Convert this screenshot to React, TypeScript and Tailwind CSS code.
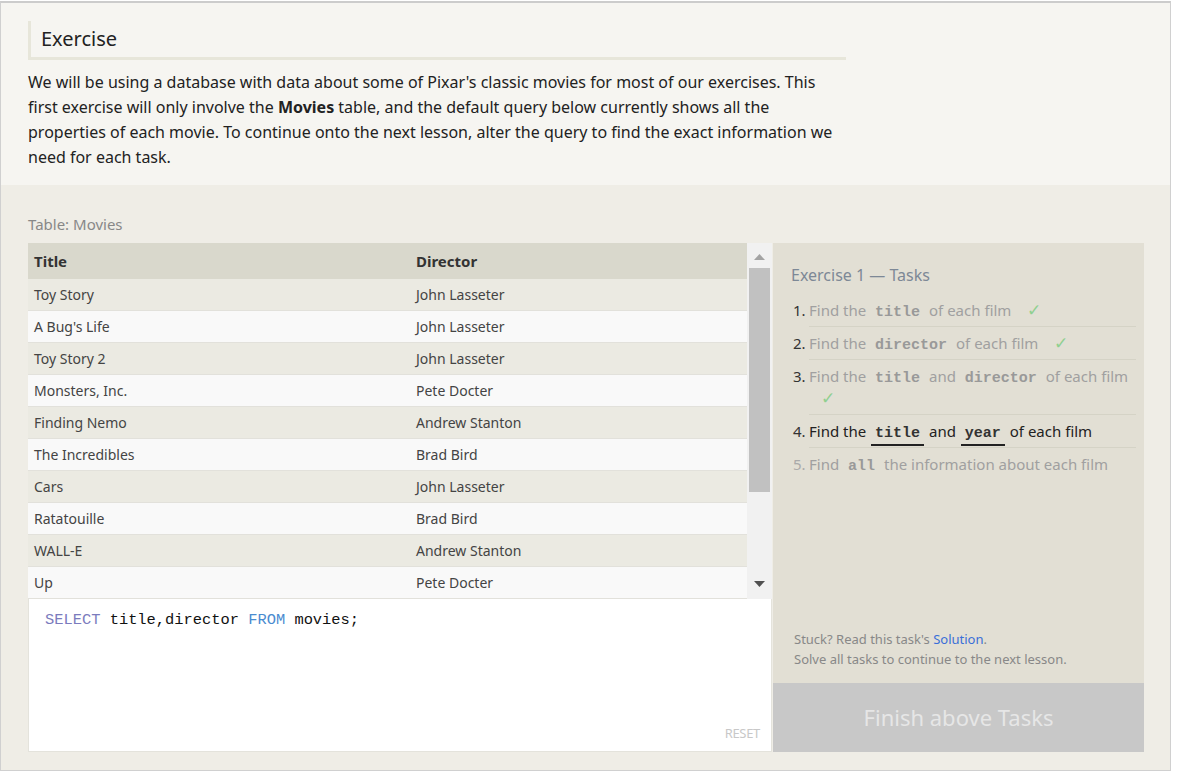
import React from 'react';

const MOVIES: [string, string][] = [
  ['Toy Story', 'John Lasseter'],
  ["A Bug's Life", 'John Lasseter'],
  ['Toy Story 2', 'John Lasseter'],
  ['Monsters, Inc.', 'Pete Docter'],
  ['Finding Nemo', 'Andrew Stanton'],
  ['The Incredibles', 'Brad Bird'],
  ['Cars', 'John Lasseter'],
  ['Ratatouille', 'Brad Bird'],
  ['WALL-E', 'Andrew Stanton'],
  ['Up', 'Pete Docter'],
];

const sans = { fontFamily: '"Noto Sans", "Open Sans", sans-serif' };
const mono = "font-['Liberation_Mono',monospace]";

const Code: React.FC<{ children: React.ReactNode; active?: boolean }> = ({ children, active }) => (
  <code
    className={`${mono} font-bold text-[15px] leading-none px-1 mx-px ${
      active ? 'text-[#333] border-b-2 border-[#222] pb-[2px]' : 'text-[#999]'
    }`}
  >
    {children}
  </code>
);

const Check = () => <span className="text-[#90d090] text-[17px] leading-none ml-3">✓</span>;

const TaskItem: React.FC<{ num: number; state: 'done' | 'current' | 'todo'; children: React.ReactNode; last?: boolean }> = ({
  num,
  state,
  children,
  last,
}) => (
  <li className="flex">
    <span className={`w-[16px] shrink-0 py-[5px] leading-[22px] ${state === 'todo' ? 'text-[#aaa]' : 'text-[#333]'}`}>
      {num}.
    </span>
    <div
      className={`flex-1 py-[5px] leading-[22px] ${last ? '' : 'border-b border-[#d5d3c6]'} ${
        state === 'current' ? 'text-[#222]' : 'text-[#a0a0a0]'
      }`}
    >
      {children}
    </div>
  </li>
);

export default function App() {
  return (
    <div className="w-[1177px] h-[775px] bg-white pt-px" style={sans}>
      <div className="w-[1171px] border-t-2 border-x border-b border-[#d0d0d0] border-t-[#cccccc]">
        {/* intro */}
        <section className="bg-[#f6f5f1] pl-[27px] pt-[18px] pb-[15px]">
          <h2 className="w-[818px] border-l-[3px] border-b-[3px] border-[#e7e6da] pl-[10px] pt-[4px] pb-[4px] text-[20px] leading-[28px] text-[#222]">
            Exercise
          </h2>
          <p className="mt-[10px] text-[16px] leading-[25px] text-[#222] whitespace-nowrap">
            We will be using a database with data about some of Pixar's classic movies for most of our exercises. This
            <br />
            first exercise will only involve the <b>Movies</b> table, and the default query below currently shows all the
            <br />
            properties of each movie. To continue onto the next lesson, alter the query to find the exact information we
            <br />
            need for each task.
          </p>
        </section>

        {/* exercise */}
        <section className="bg-[#efede6] pl-[27px] pt-[29px] pb-[18px]">
          <div className="text-[15px] leading-[20px] text-[#888]">Table: Movies</div>
          <div className="flex mt-[9px]">
            <div className="w-[744px] flex flex-col">
              <div className="flex h-[356px]">
                <div className="flex-1 text-[#444]">
                  <div className="grid grid-cols-[382px_1fr] h-[36px] items-center bg-[#d9d8cc] font-bold text-[15px] text-[#333]">
                    <div className="pl-[6px]">Title</div>
                    <div className="pl-[6px]">Director</div>
                  </div>
                  {MOVIES.map(([t, d], i) => (
                    <div
                      key={t}
                      className={`grid grid-cols-[382px_1fr] h-[32px] items-center text-[14px] border-b border-[#e2e1db] ${
                        i % 2 === 0 ? 'bg-[#ebeae2]' : 'bg-[#f9f9f9]'
                      }`}
                    >
                      <div className="pl-[6px]">{t}</div>
                      <div className="pl-[6px]">{d}</div>
                    </div>
                  ))}
                </div>
                {/* scrollbar */}
                <div className="w-[25px] bg-[#f1f1f1] flex flex-col items-center">
                  <svg width="11" height="6" viewBox="0 0 11 6" className="mt-[11px]">
                    <polygon points="5.5,0 11,6 0,6" fill="#a3a3a3" />
                  </svg>
                  <div className="mt-[8px] w-[21px] h-[224px] bg-[#c1c1c1]" />
                  <div className="flex-1" />
                  <svg width="11" height="6" viewBox="0 0 11 6" className="mb-[12px]">
                    <polygon points="0,0 11,0 5.5,6" fill="#505050" />
                  </svg>
                </div>
              </div>
              <div className="relative h-[153px] bg-white border-x border-b border-[#e4e3dc] pl-[16px] pt-[10px]">
                <div className={`${mono} text-[15.4px] leading-[22px] text-[#111]`}>
                  <span className="text-[#7b7bbd]">SELECT</span> title,director <span className="text-[#4a8bd0]">FROM</span> movies;
                </div>
                <div className="absolute right-[11px] bottom-[8px] text-[13px] text-[#c8c8c8] tracking-tight">RESET</div>
              </div>
            </div>

            {/* tasks */}
            <div className="w-[371px] ml-px bg-[#e2dfd4] flex flex-col">
              <div className="pl-[18px] pr-[8px] pt-[21px]">
                <h3 className="text-[16px] leading-[22px] text-[#7d8896]">Exercise 1 — Tasks</h3>
                <ol className="mt-[8px] pl-[2px] text-[15px]">
                  <TaskItem num={1} state="done">
                    Find the <Code>title</Code> of each film <Check />
                  </TaskItem>
                  <TaskItem num={2} state="done">
                    Find the <Code>director</Code> of each film <Check />
                  </TaskItem>
                  <TaskItem num={3} state="done">
                    Find the <Code>title</Code> and <Code>director</Code> of each film <Check />
                  </TaskItem>
                  <TaskItem num={4} state="current">
                    Find the <Code active>title</Code> and <Code active>year</Code> of each film
                  </TaskItem>
                  <TaskItem num={5} state="todo" last>
                    Find <Code>all</Code> the information about each film
                  </TaskItem>
                </ol>
              </div>
              <div className="flex-1" />
              <div className="pl-[21px] pb-[14px] text-[13px] leading-[20px] text-[#888]">
                <div>
                  Stuck? Read this task's <span className="text-[#3a6fd8]">Solution</span>.
                </div>
                <div>Solve all tasks to continue to the next lesson.</div>
              </div>
              <div className="h-[69px] bg-[#c8c8c8] flex items-center justify-center text-[22px] text-[#e6e6e6]">
                Finish above Tasks
              </div>
            </div>
          </div>
        </section>
      </div>
    </div>
  );
}
